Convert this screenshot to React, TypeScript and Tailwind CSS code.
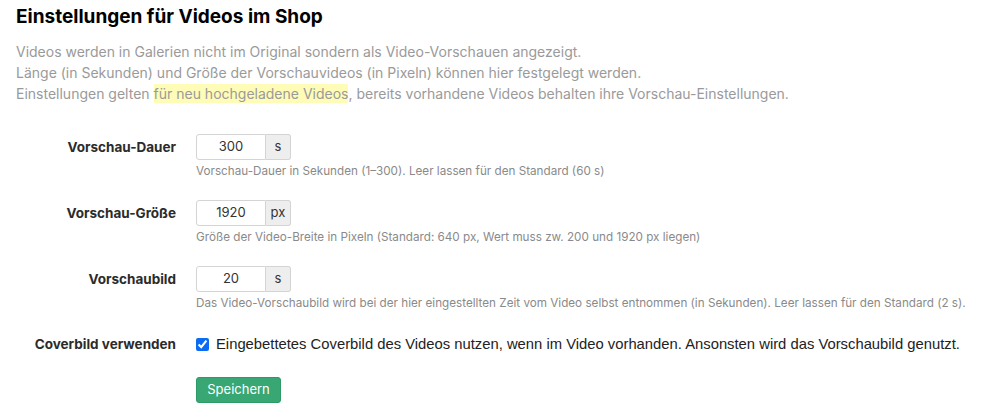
import React from "react";

const font = { fontFamily: "Inter, 'Noto Sans', sans-serif" };

type RowProps = {
  label: string;
  value: string;
  unit: string;
  help: string;
};

const FieldRow: React.FC<RowProps> = ({ label, value, unit, help }) => (
  <div className="flex items-start">
    <label className="w-[176px] pt-[3px] text-right text-[13.5px] font-bold text-[#2b2b2b]">
      {label}
    </label>
    <div className="ml-[20px] flex flex-col">
      <div className="flex h-[26px] w-[95px] text-[13px]">
        <input
          defaultValue={value}
          className="w-[70px] rounded-l-[3px] border border-[#d4d4d4] bg-white text-center text-[#333] outline-none"
        />
        <span className="flex w-[25px] items-center justify-center rounded-r-[3px] border border-l-0 border-[#d4d4d4] bg-[#eeeeee] text-[#333]">
          {unit}
        </span>
      </div>
      <p className="mt-[3px] whitespace-nowrap text-[11.7px] leading-[16px] text-[#8a8a8a]">
        {help}
      </p>
    </div>
  </div>
);

const App: React.FC = () => {
  return (
    <div className="min-h-[420px] bg-white px-4 pt-[4px]" style={font}>
      {/* heading */}
      <h1 className="text-[19px] font-bold leading-[26px] text-black">
        Einstellungen für Videos im Shop
      </h1>

      {/* intro */}
      <div className="mt-[11px] text-[14px] leading-[21px] text-[#9a9a9a]">
        <p>Videos werden in Galerien nicht im Original sondern als Video-Vorschauen angezeigt.</p>
        <p>Länge (in Sekunden) und Größe der Vorschauvideos (in Pixeln) können hier festgelegt werden.</p>
        <p>
          Einstellungen gelten <span className="bg-[#fffcb8] py-[1px]">für neu hochgeladene Videos</span>,
          bereits vorhandene Videos behalten ihre Vorschau-Einstellungen.
        </p>
      </div>

      {/* form */}
      <form className="-ml-4 mt-[30px] flex flex-col gap-[21px]">
        <FieldRow
          label="Vorschau-Dauer"
          value="300"
          unit="s"
          help="Vorschau-Dauer in Sekunden (1–300). Leer lassen für den Standard (60 s)"
        />
        <FieldRow
          label="Vorschau-Größe"
          value="1920"
          unit="px"
          help="Größe der Video-Breite in Pixeln (Standard: 640 px, Wert muss zw. 200 und 1920 px liegen)"
        />
        <FieldRow
          label="Vorschaubild"
          value="20"
          unit="s"
          help="Das Video-Vorschaubild wird bei der hier eingestellten Zeit vom Video selbst entnommen (in Sekunden). Leer lassen für den Standard (2 s)."
        />

        <div className="mt-[1px] flex items-center">
          <span className="w-[176px] text-right text-[13.5px] font-bold text-[#2b2b2b]">
            Coverbild verwenden
          </span>
          <label
            className="ml-[20px] flex items-center gap-[7px] whitespace-nowrap text-[14.8px] text-[#222]"
            style={{ fontFamily: "'Liberation Sans', Arial, sans-serif" }}
          >
            <input type="checkbox" defaultChecked className="h-[13px] w-[13px] accent-[#0b6bf2]" />
            Eingebettetes Coverbild des Videos nutzen, wenn im Video vorhanden. Ansonsten wird das
            Vorschaubild genutzt.
          </label>
        </div>

        <div className="ml-[196px]">
          <button
            type="button"
            className="h-[26px] w-[85px] rounded-[3px] border border-[#2e9a66] bg-[#38a774] text-[13px] text-white"
          >
            Speichern
          </button>
        </div>
      </form>
    </div>
  );
};

export default App;
